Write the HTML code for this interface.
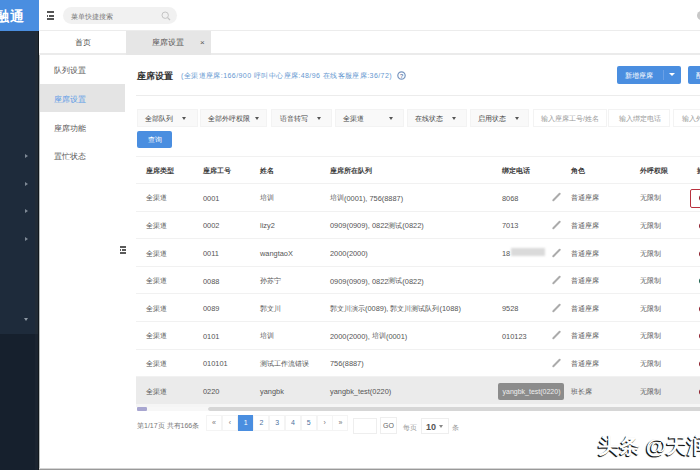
<!DOCTYPE html>
<html><head><meta charset="utf-8">
<style>
*{box-sizing:border-box;margin:0;padding:0}
html,body{width:700px;height:470px;overflow:hidden;background:#fff;font-family:"Liberation Sans",sans-serif;color:#555}
.a{position:absolute;white-space:nowrap}
#side{left:0;top:0;width:39px;height:470px;background:#1e2b3b}
#side2{left:0;top:334px;width:39px;height:136px;background:#16202d}
.tri{left:24.5px;width:0;height:0;border-top:2px solid transparent;border-bottom:2px solid transparent;border-left:3px solid #7f8a96}
#logo{left:0;top:0;width:39px;height:31px;background:#4a8ee0;overflow:hidden}
#logo span{position:absolute;left:-5px;top:7.5px;font-size:13.5px;font-weight:bold;color:#fff;letter-spacing:1px}
.arr{left:24px;width:4px;height:4px;border-right:1px solid #8a96a3;border-top:1px solid #8a96a3;transform:rotate(45deg)}
#hdr{left:39px;top:0;width:661px;height:31px;background:#fff;border-bottom:1px solid #ececec}
.ham{width:7px}
.ham i{position:absolute;left:0;width:7px;height:2px;background:#555}
#search{left:63px;top:7px;width:114px;height:17px;border-radius:9px;background:#f1f1f1}
#search span{position:absolute;left:7.5px;top:5px;font-size:7px;color:#777}
#tabs{left:39px;top:31px;width:661px;height:24px;background:#fff;border-bottom:2px solid #ebebeb}
.tab{top:31px;height:24px;font-size:8px;color:#555;text-align:center;line-height:24px}
#sub{left:39px;top:55px;width:86px;height:413px;background:#fff}
.mi{left:54px;font-size:8px;color:#555}
.f{font-size:7px}
.sel{top:109px;height:18px;background:#f9f9f9;border:1px solid #f3f3f3}
.sel span{position:absolute;left:7px;top:4px;font-size:7px;color:#444}
.car{width:0;height:0;border-left:2.75px solid transparent;border-right:2.75px solid transparent;border-top:3px solid #555}
.inp{top:109px;height:18px;background:#fff;border:1px solid #f3f3f3}
.inp span{position:absolute;left:7px;top:4px;font-size:7px;color:#999}
.th{top:166px;font-size:7px;font-weight:bold;color:#3a3a3a}
.line{left:136px;width:564px;height:1px;background:#f1f1f1}
.td{font-size:7px;color:#555}
.l{position:relative;top:0.5px;font-size:7.4px}
.pen{width:11px;height:2px;background:#ababab;transform:rotate(-45deg);border-radius:1px}
.dot{width:6px;height:6px;border-radius:3px;background:#b42a3c}
.pg{top:415px;width:16px;height:16px;border:1px solid #f4f4f4;font-size:7px;text-align:center;line-height:14px;color:#4d72a0}
</style></head><body>
<div class="a" id="side"></div>
<div class="a" id="side2"></div>
<div class="a" style="left:35px;top:31px;width:3px;height:303px;background:#222c37"></div>
<div class="a" style="left:35px;top:334px;width:3px;height:136px;background:#1b2430"></div>
<div class="a" style="left:38px;top:31px;width:1px;height:439px;background:#12181d"></div>
<div class="a" style="left:39px;top:31px;width:1px;height:439px;background:#b8bcbc"></div>
<div class="a" id="logo"><span>融通</span></div>
<div class="a tri" style="top:154px"></div>
<div class="a tri" style="top:181.5px"></div>
<div class="a tri" style="top:209px"></div>
<div class="a tri" style="top:236.5px"></div>
<div class="a" style="left:23.5px;top:318px;width:0;height:0;border-left:2.5px solid transparent;border-right:2.5px solid transparent;border-top:3px solid #8d98a3"></div>

<div class="a" id="hdr"></div>
<div class="a ham" style="left:47px;top:11px;height:9px"><i style="top:0"></i><i style="top:3.5px;left:2px;width:5px"></i><i style="top:3.5px;width:1px"></i><i style="top:7px"></i></div>
<div class="a" id="search"><span>菜单快捷搜索</span>
<svg class="a" style="left:98px;top:4px" width="10" height="10" viewBox="0 0 10 10"><circle cx="4.2" cy="4.2" r="3.2" fill="none" stroke="#c4c4c4" stroke-width="1"/><path d="M6.6 6.6 L9 9" stroke="#c4c4c4" stroke-width="1.2"/></svg>
</div>

<div class="a" id="tabs"></div>
<div class="a tab" style="left:39px;width:87px">首页</div>
<div class="a tab" style="left:126px;width:85px;background:#e6e6e6"><span style="position:absolute;left:26px">座席设置</span><span style="position:absolute;left:74px;font-size:8px">×</span></div>

<div class="a mi" style="top:65px">队列设置</div>
<div class="a" style="left:40px;top:84px;width:85px;height:28px;background:#e4e4e4"></div>
<div class="a mi" style="top:94px;color:#5a9be6">座席设置</div>
<div class="a mi" style="top:123px">座席功能</div>
<div class="a mi" style="top:151px">置忙状态</div>
<div class="a ham" style="left:120px;top:246px;height:8px"><i style="top:0;width:6px;height:1.7px;background:#5a5a5a"></i><i style="top:3.2px;left:2px;width:4px;height:1.7px;background:#5a5a5a"></i><i style="top:3.2px;width:1px;height:1.7px;background:#5a5a5a"></i><i style="top:6.3px;width:6px;height:1.7px;background:#5a5a5a"></i></div>

<!-- title -->
<div class="a" style="left:137px;top:70px;font-size:9.4px;font-weight:bold;color:#333">座席设置</div>
<div class="a" style="left:181px;top:71px;font-size:7px;letter-spacing:0.42px;color:#6597d0">(全渠道座席:166/900 呼叫中心座席:48/96 在线客服座席:36/72)</div>
<svg class="a" style="left:396.6px;top:70.9px" width="9" height="9" viewBox="0 0 9 9"><circle cx="4.5" cy="4.5" r="3.7" fill="none" stroke="#7896c0" stroke-width="1.2"/><text x="4.5" y="6.8" font-size="6" font-weight="bold" text-anchor="middle" fill="#6a86ad" font-family="Liberation Sans">?</text></svg>

<div class="a" style="left:617px;top:66px;width:64px;height:18px;background:#4a8ee0;border-radius:2px"></div>
<div class="a" style="left:625px;top:71px;font-size:7px;color:#fff">新增座席</div>
<div class="a" style="left:663px;top:70px;width:1px;height:10px;background:#6aa0e6"></div>
<div class="a car" style="left:668.5px;top:73px;border-left-width:3px;border-right-width:3px;border-top-width:3.5px;border-top-color:#fff"></div>
<div class="a" style="left:688px;top:66px;width:20px;height:18px;background:#4a8ee0;border-radius:2px"></div>
<div class="a" style="left:696px;top:71px;font-size:7px;color:#fff">配置</div>
<div class="a" style="left:697px;top:11px;width:9px;height:9px;border-radius:5px;background:#c8c8c8;filter:blur(0.5px)"></div>
<div class="a" style="left:136px;top:95px;width:564px;height:1px;background:#ececec"></div>

<!-- filters -->
<div class="a sel" style="left:137px;width:61px"><span>全部队列</span></div>
<div class="a car" style="left:182px;top:117px"></div>
<div class="a sel" style="left:200px;width:67px"><span>全部外呼权限</span></div>
<div class="a car" style="left:254.5px;top:117px"></div>
<div class="a sel" style="left:271px;width:61px"><span style="left:8px">语音转写</span></div>
<div class="a car" style="left:317px;top:117px"></div>
<div class="a sel" style="left:335px;width:69px"><span>全渠道</span></div>
<div class="a car" style="left:388.5px;top:117px"></div>
<div class="a sel" style="left:407px;width:60px"><span>在线状态</span></div>
<div class="a car" style="left:451.5px;top:117px"></div>
<div class="a sel" style="left:470px;width:59px"><span>启用状态</span></div>
<div class="a car" style="left:515px;top:117px"></div>
<div class="a inp" style="left:533px;width:74px"><span>输入座席工号/姓名</span></div>
<div class="a inp" style="left:608px;width:62px"><span style="left:10px">输入绑定电话</span></div>
<div class="a inp" style="left:673px;width:40px"><span style="left:8px">输入外呼</span></div>
<div class="a" style="left:137px;top:131px;width:35px;height:17px;background:#4a8ee0;border-radius:2px"></div>
<div class="a" style="left:148px;top:135px;font-size:7px;color:#fff">查询</div>

<!-- table -->
<div class="a line" style="top:156px"></div>
<div class="a th" style="left:146px">座席类型</div>
<div class="a th" style="left:203px">座席工号</div>
<div class="a th" style="left:260px">姓名</div>
<div class="a th" style="left:330px">座席所在队列</div>
<div class="a th" style="left:502px">绑定电话</div>
<div class="a th" style="left:571px">角色</div>
<div class="a th" style="left:640px">外呼权限</div>
<div class="a th" style="left:697px">操作</div>
<div class="a line" style="top:183px"></div>

<div id="rows"></div>
<div class="a line" style="top:210.6px"></div>
<div class="a td" style="left:146px;top:193.3px">全渠道</div>
<div class="a td" style="left:203px;top:193.3px"><span class="l">0001</span></div>
<div class="a td" style="left:260px;top:193.3px">培训</div>
<div class="a td" style="left:330px;top:193.3px">培训<span class="l">(0001), 756(8887)</span></div>
<div class="a td" style="left:502px;top:193.3px"><span class="l">8068</span></div>
<div class="a pen" style="left:550.5px;top:196.3px"></div>
<div class="a td" style="left:571px;top:193.3px">普通座席</div>
<div class="a td" style="left:640px;top:193.3px">无限制</div>
<div class="a dot" style="left:698.5px;top:195.3px;background:#8e1f2c"></div>
<div class="a" style="left:690px;top:189px;width:14px;height:19px;border:1.6px solid #b9323f;border-radius:2px"></div>
<div class="a line" style="top:238.2px"></div>
<div class="a td" style="left:146px;top:220.9px">全渠道</div>
<div class="a td" style="left:203px;top:220.9px"><span class="l">0002</span></div>
<div class="a td" style="left:260px;top:220.9px"><span class="l">lizy2</span></div>
<div class="a td" style="left:330px;top:220.9px"><span class="l">0909(0909), 0822</span>测试<span class="l">(0822)</span></div>
<div class="a td" style="left:502px;top:220.9px"><span class="l">7013</span></div>
<div class="a pen" style="left:550.5px;top:223.9px"></div>
<div class="a td" style="left:571px;top:220.9px">普通座席</div>
<div class="a td" style="left:640px;top:220.9px">无限制</div>
<div class="a dot" style="left:698.5px;top:222.9px;background:#8e1f2c"></div>
<div class="a line" style="top:265.8px"></div>
<div class="a td" style="left:146px;top:248.5px">全渠道</div>
<div class="a td" style="left:203px;top:248.5px"><span class="l">0011</span></div>
<div class="a td" style="left:260px;top:248.5px"><span class="l">wangtaoX</span></div>
<div class="a td" style="left:330px;top:248.5px"><span class="l">2000(2000)</span></div>
<div class="a td" style="left:502px;top:248.5px"><span class="l">18</span></div>
<div class="a" style="left:511px;top:248.0px;width:34px;height:8px;background:#dadada;filter:blur(1px)"></div>
<div class="a pen" style="left:550.5px;top:251.5px"></div>
<div class="a td" style="left:571px;top:248.5px">普通座席</div>
<div class="a td" style="left:640px;top:248.5px">无限制</div>
<div class="a dot" style="left:698.5px;top:250.5px;background:#8e1f2c"></div>
<div class="a line" style="top:293.4px"></div>
<div class="a td" style="left:146px;top:276.1px">全渠道</div>
<div class="a td" style="left:203px;top:276.1px"><span class="l">0088</span></div>
<div class="a td" style="left:260px;top:276.1px">孙苏宁</div>
<div class="a td" style="left:330px;top:276.1px"><span class="l">0909(0909), 0822</span>测试<span class="l">(0822)</span></div>
<div class="a td" style="left:502px;top:276.1px"></div>
<div class="a pen" style="left:550.5px;top:279.1px"></div>
<div class="a td" style="left:571px;top:276.1px">普通座席</div>
<div class="a td" style="left:640px;top:276.1px">无限制</div>
<div class="a dot" style="left:698.5px;top:278.1px;background:#1b5e4c"></div>
<div class="a line" style="top:321.0px"></div>
<div class="a td" style="left:146px;top:303.7px">全渠道</div>
<div class="a td" style="left:203px;top:303.7px"><span class="l">0089</span></div>
<div class="a td" style="left:260px;top:303.7px">郭文川</div>
<div class="a td" style="left:330px;top:303.7px">郭文川演示<span class="l">(0089), </span>郭文川测试队列<span class="l">(1088)</span></div>
<div class="a td" style="left:502px;top:303.7px"><span class="l">9528</span></div>
<div class="a pen" style="left:550.5px;top:306.7px"></div>
<div class="a td" style="left:571px;top:303.7px">普通座席</div>
<div class="a td" style="left:640px;top:303.7px">无限制</div>
<div class="a dot" style="left:698.5px;top:305.7px;background:#8e1f2c"></div>
<div class="a line" style="top:348.6px"></div>
<div class="a td" style="left:146px;top:331.3px">全渠道</div>
<div class="a td" style="left:203px;top:331.3px"><span class="l">0101</span></div>
<div class="a td" style="left:260px;top:331.3px">培训</div>
<div class="a td" style="left:330px;top:331.3px"><span class="l">2000(2000), </span>培训<span class="l">(0001)</span></div>
<div class="a td" style="left:502px;top:331.3px"><span class="l">010123</span></div>
<div class="a pen" style="left:550.5px;top:334.3px"></div>
<div class="a td" style="left:571px;top:331.3px">普通座席</div>
<div class="a td" style="left:640px;top:331.3px">无限制</div>
<div class="a dot" style="left:698.5px;top:333.3px;background:#8e1f2c"></div>
<div class="a line" style="top:376.2px"></div>
<div class="a td" style="left:146px;top:358.9px">全渠道</div>
<div class="a td" style="left:203px;top:358.9px"><span class="l">010101</span></div>
<div class="a td" style="left:260px;top:358.9px">测试工作流错误</div>
<div class="a td" style="left:330px;top:358.9px"><span class="l">756(8887)</span></div>
<div class="a td" style="left:502px;top:358.9px"></div>
<div class="a pen" style="left:550.5px;top:361.9px"></div>
<div class="a td" style="left:571px;top:358.9px">普通座席</div>
<div class="a td" style="left:640px;top:358.9px">无限制</div>
<div class="a dot" style="left:698.5px;top:360.9px;background:#8e1f2c"></div>
<div class="a" style="left:136px;top:376.7px;width:564px;height:27.0px;background:#ebebeb"></div>
<div class="a td" style="left:146px;top:386.5px">全渠道</div>
<div class="a td" style="left:203px;top:386.5px"><span class="l">0220</span></div>
<div class="a td" style="left:260px;top:386.5px"><span class="l">yangbk</span></div>
<div class="a td" style="left:330px;top:386.5px"><span class="l">yangbk_test(0220)</span></div>
<div class="a td" style="left:502px;top:386.5px"></div>
<div class="a" style="left:498px;top:383px;width:66px;height:17px;background:#8c8c8c;border-radius:2px"></div>
<div class="a td" style="left:502.5px;top:388px;color:#eee">yangbk_test(0220)</div>
<div class="a td" style="left:571px;top:386.5px">班长席</div>
<div class="a td" style="left:640px;top:386.5px">无限制</div>
<div class="a dot" style="left:698.5px;top:388.5px;background:#8e1f2c"></div>
<div class="a" style="left:136px;top:403.7px;width:564px;height:3px;background:#f5f5f5"></div>
<div class="a" style="left:137px;top:406.5px;width:10px;height:4.5px;background:#a8a6d0;border-radius:1px"></div>
<div class="a" style="left:147px;top:406.5px;width:61px;height:4.5px;background:#f7f7f7"></div>
<div class="a" style="left:208px;top:406.5px;width:500px;height:4.5px;background:#d6d6d6;border-radius:2px"></div>
<div class="a td" style="left:137px;top:421px;font-size:7px;color:#777">第1/17页 共有166条</div>
<div class="a pg" style="left:206.0px;color:#777">«</div>
<div class="a pg" style="left:221.8px;color:#777">‹</div>
<div class="a pg" style="left:237.6px;background:#4a8ee0;color:#fff;border-color:#4a8ee0">1</div>
<div class="a pg" style="left:253.4px;">2</div>
<div class="a pg" style="left:269.2px;">3</div>
<div class="a pg" style="left:285.0px;">4</div>
<div class="a pg" style="left:300.8px;">5</div>
<div class="a pg" style="left:316.6px;color:#777">›</div>
<div class="a pg" style="left:332.4px;color:#777">»</div>

<div class="a" style="left:353px;top:418px;width:24px;height:16px;border:1px solid #eee"></div>
<div class="a" style="left:380px;top:417px;width:17px;height:17px;border:1px solid #eee;font-size:7px;line-height:15px;text-align:center;color:#666">GO</div>
<div class="a td" style="left:403px;top:423px;color:#999">每页</div>
<div class="a" style="left:421px;top:418px;width:28px;height:16px;border:1px solid #eee"></div>
<div class="a" style="left:426px;top:421.5px;font-size:9px;font-weight:bold;color:#555">10</div>
<div class="a car" style="left:439px;top:425px;border-top-color:#888"></div>
<div class="a td" style="left:452px;top:423px;color:#999">条</div>
<div class="a" style="left:598px;top:432px;font-size:21px;font-weight:bold;color:#fff;text-shadow:-1px 1px 0 #111,-1px 1px 1px #444">头条 @天润</div>
<div class="a" style="left:39px;top:468px;width:661px;height:1px;background:#d4d4d4"></div><div class="a" style="left:39px;top:469px;width:661px;height:1px;background:#999"></div>
</body></html>
